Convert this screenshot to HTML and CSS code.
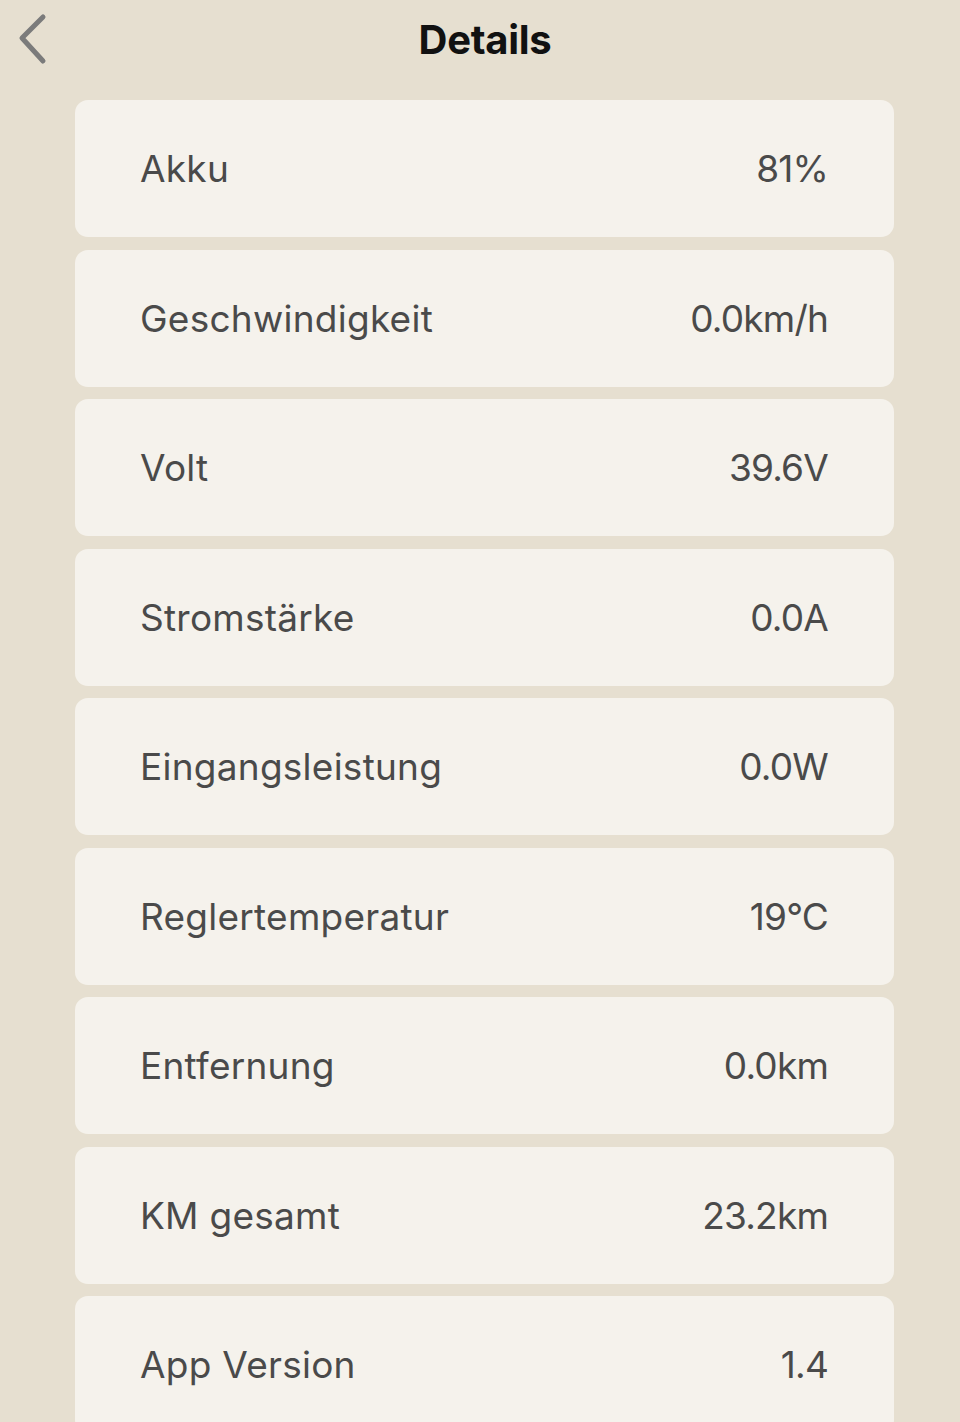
FILE: index.html
```html
<!DOCTYPE html>
<html lang="de">
<head>
<meta charset="utf-8">
<title>Details</title>
<link rel="stylesheet" href="styles.css">
</head>
<body>
<header class="nav">
  <button class="back" aria-label="Zurück">
    <svg width="34" height="58" viewBox="0 0 34 58"><path d="M27 7 L6 28 L27 51" fill="none" stroke="#7b7b7b" stroke-width="5" stroke-linecap="round" stroke-linejoin="round"/></svg>
  </button>
  <h1 class="title">Details</h1>
</header>
<main class="list">
  <div class="row"><span class="label">Akku</span><span class="value">81%</span></div>
  <div class="row"><span class="label">Geschwindigkeit</span><span class="value">0.0km/h</span></div>
  <div class="row"><span class="label">Volt</span><span class="value">39.6V</span></div>
  <div class="row"><span class="label">Stromstärke</span><span class="value">0.0A</span></div>
  <div class="row"><span class="label">Eingangsleistung</span><span class="value">0.0W</span></div>
  <div class="row"><span class="label">Reglertemperatur</span><span class="value">19°C</span></div>
  <div class="row"><span class="label">Entfernung</span><span class="value">0.0km</span></div>
  <div class="row"><span class="label">KM gesamt</span><span class="value">23.2km</span></div>
  <div class="row"><span class="label">App Version</span><span class="value">1.4</span></div>
</main>
</body>
</html>
```

FILE: styles.css
```css
html, body {
  margin: 0;
  padding: 0;
  background: #e6dfd0;
  font-family: Inter, "Noto Sans", "Liberation Sans", sans-serif;
}
body {
  width: 960px;
  height: 1422px;
  overflow: hidden;
}
.nav {
  height: 100px;
  display: flex;
  justify-content: center;
  position: relative;
}
.back {
  position: absolute;
  left: 16px;
  top: 10px;
  background: none;
  border: 0;
  padding: 0;
  margin: 0;
  line-height: 0;
}
.title {
  margin: 12px 0 0 10px;
  font-size: 40px;
  font-weight: 700;
  color: #111;
  letter-spacing: -0.3px;
  line-height: 55px;
}
.list {
  display: flex;
  flex-direction: column;
  gap: 12.5px;
  margin-left: 75px;
  width: 819px;
}
.row {
  height: 137px;
  background: #f5f2ec;
  border-radius: 13px;
  display: flex;
  align-items: center;
  justify-content: space-between;
  padding: 0 66px 0 65px;
  box-sizing: border-box;
  color: #4a4a4a;
  font-size: 37px;
}
.label {
  letter-spacing: 0.25px;
}
.value {
  letter-spacing: -0.8px;
}
```
